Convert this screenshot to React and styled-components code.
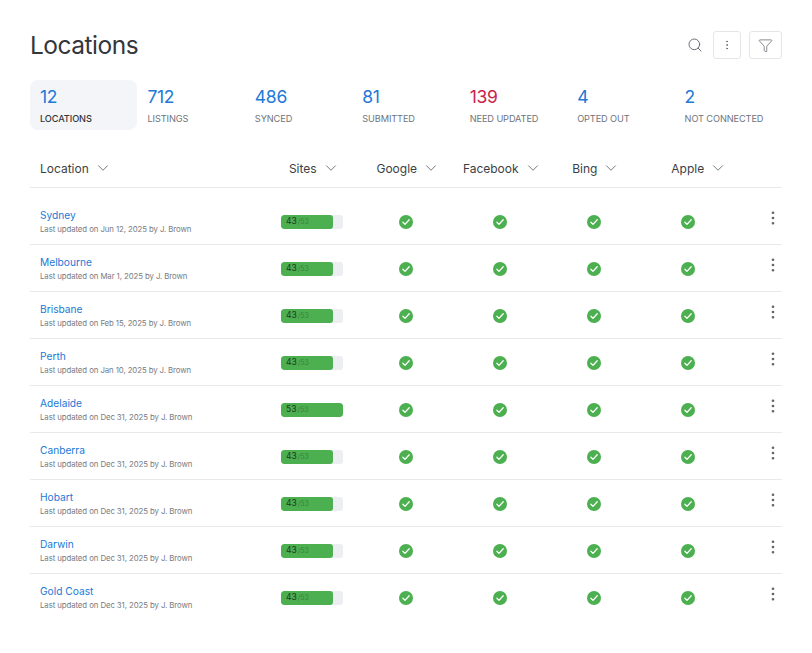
import React from "react";
import styled, { createGlobalStyle } from "styled-components";
import { Search, EllipsisVertical, Funnel, ChevronDown } from "lucide-react";

const Global = createGlobalStyle`
  html, body { margin: 0; padding: 0; background: #fff; }
  body { font-family: Inter, "Noto Sans", "Liberation Sans", sans-serif; color: #33373d; }
  * { box-sizing: border-box; }
`;

const Page = styled.div`
  width: 812px;
  height: 653px;
  padding: 31px 30px 0;
`;

const TitleBar = styled.header`
  display: flex;
  align-items: center;
  justify-content: space-between;
  height: 28px;
`;

const Title = styled.h1`
  margin: 0;
  font-size: 24.5px;
  font-weight: 400;
  letter-spacing: -0.5px;
  color: #33373d;
`;

const Tools = styled.div`
  display: flex;
  align-items: center;
  gap: 8px;
  color: #6a6f76;
`;

const SearchButton = styled.span`
  display: flex;
  margin-right: 2px;
  width: 16px;
  justify-content: center;
`;

const ToolButton = styled.button`
  display: flex;
  align-items: center;
  justify-content: center;
  width: ${(p) => p.$w}px;
  height: 28px;
  padding: 0;
  border: 1px solid #e4e6ea;
  border-radius: 3px;
  background: #fff;
  color: #5f646b;
`;

const Stats = styled.section`
  display: grid;
  grid-template-columns: repeat(7, 1fr);
  margin-top: 21px;
`;

const Stat = styled.div`
  height: 50px;
  padding: 7px 10px 0;
  border-radius: 8px;
  background: ${(p) => (p.$active ? "#f4f5f9" : "transparent")};
`;

const StatValue = styled.div`
  font-size: 17.5px;
  line-height: 20px;
  letter-spacing: -0.3px;
  color: ${(p) => (p.$alert ? "#c9264d" : "#2279d6")};
`;

const StatLabel = styled.div`
  margin-top: 6px;
  font-size: 9.2px;
  line-height: 12px;
  letter-spacing: -0.1px;
  white-space: nowrap;
  font-weight: ${(p) => (p.$active ? 500 : 400)};
  color: ${(p) => (p.$active ? "#33373d" : "#6f747b")};
`;

const Columns = styled.div`
  display: grid;
  grid-template-columns: 235px repeat(5, 94px) 47px;
  align-items: center;
`;

const HeadRow = styled(Columns)`
  height: 38px;
  margin-top: 20px;
  border-bottom: 1px solid #e8e9ec;
  margin-bottom: 10px;
`;

const HeadCell = styled.div`
  display: flex;
  align-items: center;
  justify-content: ${(p) => (p.$start ? "flex-start" : "center")};
  gap: 5px;
  padding-left: ${(p) => (p.$start ? 10 : p.$shift || 0)}px;
  padding-bottom: 1px;
  font-size: 12px;
  color: #3b3f45;
  svg { color: #666b72; margin-right: -4.5px; }
`;

const Row = styled(Columns)`
  height: 47px;
  padding-top: 2px;
  border-bottom: 1px solid ${(p) => (p.$last ? "transparent" : "#e8e9ec")};
`;

const Place = styled.div`
  padding-left: 10px;
`;

const PlaceName = styled.a`
  display: block;
  margin: -1px 0 1px;
  font-size: 10.2px;
  line-height: 14px;
  color: #2279d6;
`;

const Updated = styled.div`
  font-size: 7.8px;
  line-height: 12px;
  letter-spacing: -0.08px;
  white-space: nowrap;
  color: #777b82;
`;

const Center = styled.div`
  display: flex;
  justify-content: center;
`;

const Track = styled.div`
  position: relative;
  width: 62px;
  height: 14px;
  border-radius: 3px;
  background: #eceef1;
  overflow: hidden;
`;

const Fill = styled.div`
  height: 100%;
  border-radius: 3px;
  background: #4caf50;
`;

const BarText = styled.div`
  position: absolute;
  left: 5px;
  top: 0;
  line-height: 13px;
  font-size: 8.5px;
  color: #1e3a20;
  span { font-size: 7px; color: #3f7f44; margin-left: 1px; }
`;

const Actions = styled.div`
  display: flex;
  justify-content: flex-end;
  margin-top: -9px;
  color: #5f646b;
`;

const Check = () => (
  <svg width="14" height="14" viewBox="0 0 14 14">
    <circle cx="7" cy="7" r="7" fill="#4caf50" />
    <path d="M3.9 7.3 6 9.4 10.2 4.8" fill="none" stroke="#fff" strokeWidth="1.3" strokeLinecap="round" strokeLinejoin="round" />
  </svg>
);

const stats = [
  ["12", "LOCATIONS", true],
  ["712", "LISTINGS"],
  ["486", "SYNCED"],
  ["81", "SUBMITTED"],
  ["139", "NEED UPDATED", false, true],
  ["4", "OPTED OUT"],
  ["2", "NOT CONNECTED"],
];

const heads = [["Sites"], ["Google"], ["Facebook"], ["Bing"], ["Apple", 18]];

const rows = [
  ["Sydney", "Jun 12, 2025", 43],
  ["Melbourne", "Mar 1, 2025", 43],
  ["Brisbane", "Feb 15, 2025", 43],
  ["Perth", "Jan 10, 2025", 43],
  ["Adelaide", "Dec 31, 2025", 53],
  ["Canberra", "Dec 31, 2025", 43],
  ["Hobart", "Dec 31, 2025", 43],
  ["Darwin", "Dec 31, 2025", 43],
  ["Gold Coast", "Dec 31, 2025", 43],
];

export default function App() {
  return (
    <Page>
      <Global />
      <TitleBar>
        <Title>Locations</Title>
        <Tools>
          <SearchButton><Search size={16} strokeWidth={1.5} /></SearchButton>
          <ToolButton $w={28}><EllipsisVertical size={12} strokeWidth={1.6} /></ToolButton>
          <ToolButton $w={33}><Funnel size={15} strokeWidth={1.2} /></ToolButton>
        </Tools>
      </TitleBar>
      <Stats>
        {stats.map(([v, l, a, r]) => (
          <Stat key={l} $active={a}>
            <StatValue $alert={r}>{v}</StatValue>
            <StatLabel $active={a}>{l}</StatLabel>
          </Stat>
        ))}
      </Stats>
      <HeadRow>
        <HeadCell $start>Location <ChevronDown size={18} strokeWidth={1.2} /></HeadCell>
        {heads.map(([h, s]) => (
          <HeadCell key={h} $shift={s}>{h} <ChevronDown size={18} strokeWidth={1.2} /></HeadCell>
        ))}
      </HeadRow>
      {rows.map(([name, date, n], i) => (
        <Row key={name} $last={i === rows.length - 1}>
          <Place>
            <PlaceName>{name}</PlaceName>
            <Updated>Last updated on {date} by J. Brown</Updated>
          </Place>
          <Center>
            <Track>
              <Fill style={{ width: `${n === 53 ? 100 : 84}%` }} />
              <BarText>{n}<span>/53</span></BarText>
            </Track>
          </Center>
          {[0, 1, 2, 3].map((k) => (
            <Center key={k}><Check /></Center>
          ))}
          <Actions><EllipsisVertical size={18} strokeWidth={1.6} /></Actions>
        </Row>
      ))}
    </Page>
  );
}
